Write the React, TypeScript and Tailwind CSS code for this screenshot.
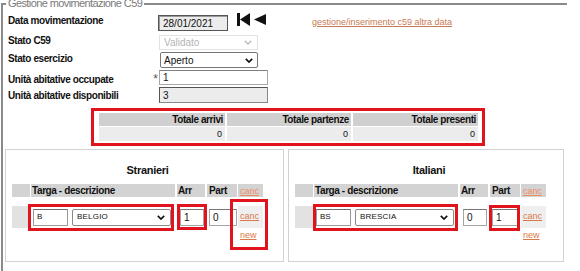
import React from 'react';

// annotation rectangles drawn over the screenshot
const RED = 'pointer-events-none absolute border-[3px] border-[#e0141c]';

function Chevron({ color }: { color: string }) {
  return (
    <svg width="8" height="5" viewBox="0 0 8 5" className="shrink-0">
      <path d="M0.8 0.8 L4 4 L7.2 0.8" fill="none" stroke={color} strokeWidth="1.7" />
    </svg>
  );
}

function NavIcons() {
  return (
    <div className="ml-[9px] flex items-center gap-[4px]">
      <svg width="13" height="13" viewBox="0 0 13 13">
        <rect x="0" y="0" width="3" height="13" fill="#111" />
        <path d="M13 0 L3 6.5 L13 13 Z" fill="#111" />
      </svg>
      <svg width="12" height="11" viewBox="0 0 12 11">
        <path d="M12 0 L0 5.5 L12 11 Z" fill="#111" />
      </svg>
    </div>
  );
}

function NationBox({
  title,
  targa,
  nation,
  arr,
  part,
  width,
  marks,
}: {
  title: string;
  targa: string;
  nation: string;
  arr: string;
  part: string;
  width: string;
  marks: React.ReactNode;
}) {
  return (
    <div className={`relative h-[113px] border border-[#d2d2d2] pl-[6px] ${width}`}>
      <div className="mt-[15px] text-center text-[11px] font-bold leading-[11px] tracking-[-0.3px]">{title}</div>

      {/* header row */}
      <div className="mt-[8px] flex h-[13px] items-center text-[10px] font-bold leading-[10px] tracking-[-0.4px]">
        <div className="h-full w-[18px] bg-[#d3d3d3]" />
        <div className="ml-[1px] flex h-full w-[144px] items-center bg-[#d3d3d3] pl-[1px]">Targa - descrizione</div>
        <div className="ml-[2px] flex h-full w-[28px] items-center bg-[#d3d3d3] pl-[1px]">Arr</div>
        <div className="ml-[2px] flex h-full w-[30px] items-center bg-[#d3d3d3] pl-[2px]">Part</div>
        <div className="ml-[1px] flex h-full w-[25px] items-center bg-[#d3d3d3] pl-[2px] text-[9px] font-normal tracking-normal">
          <span className="text-[#ef8d62] underline">canc</span>
        </div>
      </div>

      {/* data row */}
      <div className="mt-[9px] flex h-[22px] items-center">
        <div className="h-full w-[18px] bg-[#e2e2e2]" />
        <div className="ml-[1px] flex h-full w-[144px] items-center">
          <div className="ml-[2px] flex h-[17px] w-[35px] items-center border border-[#9a9a9a] border-t-[#6f6f6f] pl-[3px] text-[8px]">
            {targa}
          </div>
          <div className="ml-[4px] flex h-[17px] w-[99px] items-center justify-between rounded-[2px] border border-[#8a8a8a] pl-[4px] pr-[5px] text-[8px] tracking-[0.2px]">
            <span>{nation}</span>
            <Chevron color="#111" />
          </div>
        </div>
        <div className="ml-[2px] flex h-full w-[28px] items-center">
          <div className="ml-[3px] flex h-[17px] w-[24px] items-center border border-[#a5a5a5] border-t-[#777] pl-[3px] text-[10px]">
            {arr}
          </div>
        </div>
        <div className="ml-[2px] flex h-full w-[30px] items-center">
          <div className="ml-[2px] flex h-[17px] w-[28px] items-center border border-[#a5a5a5] border-t-[#777] pl-[3px] text-[10px]">
            {part}
          </div>
        </div>
        <div className="ml-[1px] flex h-full w-[25px] items-center bg-[#efefef] pl-[2px] text-[9px]">
          <span className="text-[#d9794a] underline">canc</span>
        </div>
      </div>

      <div className="ml-[228px] mt-[3px] text-[9px] leading-[9px]">
        <span className="text-[#d9794a] underline">new</span>
      </div>

      {marks}
    </div>
  );
}

const LABEL = 'w-[145px] shrink-0 pl-[3px] text-[10px] font-bold leading-[10px] tracking-[-0.4px]';

export default function App() {
  return (
    <div className="relative h-[271px] w-[580px] overflow-hidden bg-white font-['Liberation_Sans',Arial,sans-serif] text-[#111]">
      <div className="relative ml-[1px] mt-[3px] h-[280px] w-[566px] border-l-2 border-t-2 border-[#8a8a8a] pl-[2px]">
        <span className="absolute left-[3px] top-[-8px] bg-white px-[2px] text-[11px] leading-[13px] tracking-[-0.6px] text-[#7a7a7a]">
          Gestione movimentazione C59
        </span>

        {/* Data movimentazione */}
        <div className="mt-[8px] flex h-[22px] items-start">
          <div className={`${LABEL} pt-[3px]`}>Data movimentazione</div>
          <div className="w-[9px] shrink-0" />
          <div className="-ml-[1px] mt-[2px] flex h-[16px] w-[70px] items-center border border-[#555] bg-[#ececec] pl-[4px] text-[10px] shadow-[inset_1px_1px_0_#9a9a9a]">
            28/01/2021
          </div>
          <NavIcons />
          <span className="ml-[46px] mt-[5px] text-[9px] leading-[9px] text-[#c87a52] underline">
            gestione/inserimento c59 altra data
          </span>
        </div>

        {/* Stato C59 */}
        <div className="flex h-[17px] items-start">
          <div className={`${LABEL} pt-[1px]`}>Stato C59</div>
          <div className="w-[9px] shrink-0" />
          <div className="flex h-[15px] w-[99px] items-center justify-between border border-[#e2e2e2] pl-[4px] pr-[5px] text-[10px] text-[#b4b4b4]">
            <span>Validato</span>
            <Chevron color="#c4c4c4" />
          </div>
        </div>

        {/* Stato esercizio */}
        <div className="flex h-[18px] items-start">
          <div className={`${LABEL} pt-[2px]`}>Stato esercizio</div>
          <div className="w-[9px] shrink-0" />
          <div className="ml-[1px] flex h-[16px] w-[98px] items-center justify-between rounded-[2px] border border-[#777] pl-[3px] pr-[4px] text-[10px]">
            <span>Aperto</span>
            <Chevron color="#111" />
          </div>
        </div>

        {/* Unità abitative occupate */}
        <div className="flex h-[17px] items-start">
          <div className={`${LABEL} pt-[5px]`}>Unità abitative occupate</div>
          <div className="flex w-[9px] shrink-0 justify-end pr-[1px] pt-[3px] text-[12px] leading-[12px] text-[#555]">*</div>
          <div className="flex h-[15px] w-[109px] items-center border border-[#a8a8a8] border-t-[#808080] pl-[3px] text-[10px]">
            1
          </div>
        </div>

        {/* Unità abitative disponibili */}
        <div className="flex h-[16px] items-start">
          <div className={`${LABEL} pt-[4px]`}>Unità abitative disponibili</div>
          <div className="w-[9px] shrink-0" />
          <div className="flex h-[16px] w-[109px] items-center border border-[#8a8a8a] border-l-[#555] border-t-[#555] bg-[#ececec] pl-[3px] text-[10px]">
            3
          </div>
        </div>

        {/* Totali */}
        <div className="ml-[86px] mt-[5px] w-[394px] border-[3px] border-[#e0141c] pb-[2px] pl-[5px] pr-[4px] pt-[2px]">
          <div className="flex gap-[2px] text-[10px] font-bold leading-[10px] tracking-[-0.4px]">
            <div className="flex h-[13px] w-[126px] items-center justify-end bg-[#d0d0d0] pr-[2px]">Totale arrivi</div>
            <div className="flex h-[13px] w-[124px] items-center justify-end bg-[#d0d0d0] pr-[2px]">Totale partenze</div>
            <div className="flex h-[13px] w-[125px] items-center justify-end bg-[#d0d0d0] pr-[2px]">Totale presenti</div>
          </div>
          <div className="mt-[1px] flex gap-[2px] text-[9px] leading-[9px]">
            <div className="flex h-[14px] w-[126px] items-center justify-end bg-[#ececec] pr-[3px]">0</div>
            <div className="flex h-[14px] w-[124px] items-center justify-end bg-[#ececec] pr-[3px]">0</div>
            <div className="flex h-[14px] w-[125px] items-center justify-end bg-[#ececec] pr-[3px]">0</div>
          </div>
        </div>

        {/* Stranieri / Italiani */}
        <div className="mt-[3px] flex gap-[4px]">
          <NationBox
            title="Stranieri"
            targa="B"
            nation="BELGIO"
            arr="1"
            part="0"
            width="w-[279px]"
            marks={
              <>
                <div className={`${RED} left-[22px] top-[54px] h-[27px] w-[146px]`} />
                <div className={`${RED} left-[171px] top-[54px] h-[26px] w-[30px]`} />
                <div className={`${RED} left-[224px] top-[49px] h-[51px] w-[38px]`} />
              </>
            }
          />
          <NationBox
            title="Italiani"
            targa="BS"
            nation="BRESCIA"
            arr="0"
            part="1"
            width="w-[276px]"
            marks={
              <>
                <div className={`${RED} left-[24px] top-[54px] h-[27px] w-[145px]`} />
                <div className={`${RED} left-[200px] top-[55px] h-[26px] w-[31px]`} />
              </>
            }
          />
        </div>
      </div>
    </div>
  );
}
